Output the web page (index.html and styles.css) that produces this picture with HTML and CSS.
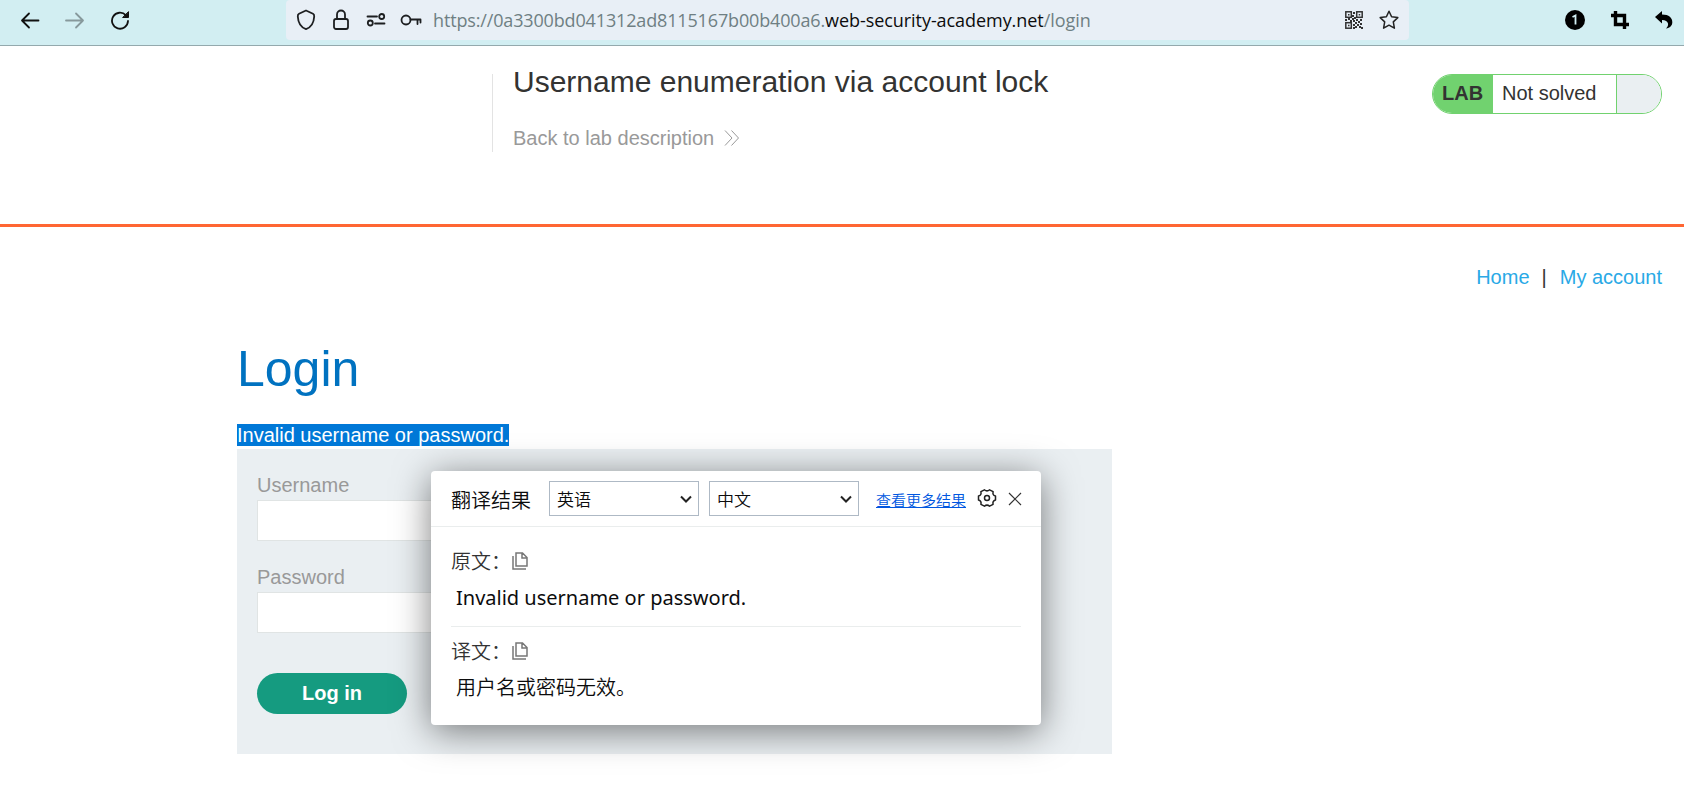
FILE: index.html
```html
<!DOCTYPE html>
<html lang="en">
<head>
<meta charset="utf-8">
<title>Username enumeration via account lock</title>
<link rel="stylesheet" href="styles.css">
</head>
<body>
<div class="toolbar">
  <div class="nav-icons">
    <svg width="20" height="20" viewBox="0 0 20 20" class="line"><path d="M18.5 10.5H2M9 3.5L2 10.5L9 17.5"/></svg>
    <svg width="20" height="20" viewBox="0 0 20 20" class="line dim"><path d="M1 10.5H18M11 3.5L18 10.5L11 17.5"/></svg>
    <svg width="20" height="20" viewBox="0 0 20 20" class="line"><path d="M15.8 5.2A8 8 0 1 0 18 11"/><path d="M18.5 2V7.5H13Z" fill="#111" stroke-width="1"/></svg>
  </div>
  <div class="urlbar">
    <div class="url-icons">
      <svg width="20" height="22" viewBox="0 0 20 22" class="line ink"><path d="M10 1.5L17 4.8C18 5.3 18.3 6 18.2 7.5C17.9 13 15.5 18.2 10 20.2C4.500 18.200 2.100 13 1.800 7.500C1.700 6 2 5.300 3 4.800Z"/></svg>
      <svg width="18" height="22" viewBox="0 0 18 22" class="line ink"><rect x="2" y="10" width="14" height="10" rx="2"/><path d="M5 10V5.500A4 4 0 0 1 13 5.500V10"/></svg>
      <svg width="20" height="14" viewBox="0 0 20 14" class="line ink"><path d="M1.500 3.500H11M9 10.500H18.500"/><circle cx="15.700" cy="3.500" r="2.500"/><circle cx="4.300" cy="10" r="2.500"/></svg>
      <svg width="22" height="14" viewBox="0 0 22 14" class="line ink key"><circle cx="6" cy="7" r="4.500"/><path d="M10.500 6.500H20.500V9.500M17.500 6.500V11"/></svg>
    </div>
    <div class="url"><span class="host">https://0a3300bd041312ad8115167b00b400a6.</span><span class="domain">web-security-academy.net</span><span>/login</span></div>
    <svg class="qr" width="18" height="18" viewBox="0 0 18 18"><g fill="none" stroke="#333" stroke-width="1.500"><rect x=".8" y=".8" width="5.500" height="5.500"/><rect x="11.700" y=".8" width="5.500" height="5.500"/><rect x=".8" y="11.700" width="5.500" height="5.500"/></g><path fill="#333" d="M3 3h1.500v1.500H3zM13.700 3h1.500v1.500h-1.500zM3 13.700h1.500v1.500H3zM8 1h2v2H8zM7 4h2v2H7zM9 6h2v2H9zM0 8h2v2H0zM3 7h2v2H3zM5 9h2v2H5zM7 7h2v2H7zM8 9h2v2H8zM11 8h2v2h-2zM13 10h2v2h-2zM15 8h2v2h-2zM10 11h2v2h-2zM8 13h2v2H8zM12 13h2v2h-2zM15 12h2v2h-2zM10 15h2v2h-2zM14 15h2v2h-2zM16 16h2v2h-2zM8 16h2v2H8z"/></svg>
    <svg class="star" width="20" height="20" viewBox="0 0 20 20"><path d="M10 1.200L12.600 6.800L18.800 7.600L14.300 11.900L15.400 18.200L10 15.200L4.600 18.200L5.700 11.900L1.200 7.600L7.400 6.800Z" fill="none" stroke="#222" stroke-width="1.500" stroke-linejoin="round"/></svg>
  </div>
  <div class="ext-icons">
    <svg width="20" height="20" viewBox="0 0 20 20"><circle cx="10" cy="10" r="10"/><path d="M7.500 7L10.500 5.500V14.500" fill="none" stroke="#d2eef2" stroke-width="1.800"/></svg>
    <svg width="18" height="18" viewBox="0 0 18 18"><path d="M4.500 0V13.500H18M0 4.500H13.500V18" fill="none" stroke="#000" stroke-width="3.400"/></svg>
    <svg width="18" height="18" viewBox="0 0 18 18"><path d="M0 6L7 0V3.500C14 3.500 17.500 7 17.300 11.500C17.200 14.500 15 17 11 17.500C14.500 14.500 14 9 7 9V12.500Z"/></svg>
  </div>
</div>

<header class="lab-header">
  <div class="lab-title">
    <h2>Username enumeration via account lock</h2>
    <a class="back">Back to lab description
      <svg width="16" height="16" viewBox="0 0 16 16"><path d="M1 .5L8 8L1 15.500M7.500 .5L14.500 8L7.500 15.500" fill="none" stroke="#999" stroke-width="1"/></svg>
    </a>
  </div>
  <div class="status"><b>LAB</b><span>Not solved</span><i></i></div>
</header>

<nav class="links"><a>Home</a><span>|</span><a>My account</a></nav>

<main>
  <h1>Login</h1>
  <p class="warning"><span>Invalid username or password.</span></p>
  <section class="login">
    <label>Username</label>
    <div class="field"></div>
    <label>Password</label>
    <div class="field"></div>
    <button>Log in</button>

    <div class="popup">
      <div class="popup-head">
        <span class="popup-title">翻译结果</span>
        <div class="select"><span>英语</span><svg width="12" height="8" viewBox="0 0 12 8"><path d="M1 1.500L6 6.500L11 1.500"/></svg></div>
        <div class="select"><span>中文</span><svg width="12" height="8" viewBox="0 0 12 8"><path d="M1 1.500L6 6.500L11 1.500"/></svg></div>
        <a class="more">查看更多结果</a>
        <svg class="gear" width="20" height="20" viewBox="0 0 20 20"><path d="M18.500 8V12Q15.200 13 16.100 16.300L12.600 18.200Q10 16 7.400 18.200L3.900 16.300Q4.800 13 1.500 12V8Q4.800 7 3.900 3.700L7.400 1.800Q10 4 12.600 1.800L16.100 3.700Q15.200 7 18.500 8Z"/><circle cx="10" cy="10" r="2.500"/></svg>
        <svg class="close" width="14" height="14" viewBox="0 0 14 14"><path d="M1 1L13 13M13 1L1 13"/></svg>
      </div>
      <div class="popup-body">
        <div class="row"><span>原文：</span><svg width="16" height="18" viewBox="0 0 16 18"><path d="M4 1H10.500L15 5.500V14H4ZM10 1V6H15M1 4V17H14"/></svg></div>
        <div class="text en">Invalid username or password.</div>
        <div class="row second"><span>译文：</span><svg width="16" height="18" viewBox="0 0 16 18"><path d="M4 1H10.500L15 5.500V14H4ZM10 1V6H15M1 4V17H14"/></svg></div>
        <div class="text">用户名或密码无效。</div>
      </div>
    </div>
  </section>
</main>
</body>
</html>
```
FILE: styles.css
```css
* { box-sizing: border-box; }
body {
  margin: 0;
  height: 809px;
  overflow: hidden;
  background: #fff;
  color: #333332;
  font: 20px/24px "Liberation Sans", Arial, sans-serif;
}
svg { display: block; flex: none; }

.toolbar {
  height: 46px;
  display: flex;
  background: #d2eef2;
  border-bottom: 1px solid #94a9ad;
}
.line {
  fill: none;
  stroke: #111;
  stroke-width: 1.8;
  stroke-linecap: round;
  stroke-linejoin: round;
}
.line.dim { stroke: #87999c; }
.line.ink { stroke: #1d1f21; }
.nav-icons { width: 286px; height: 40px; padding-left: 20px; display: flex; align-items: center; gap: 25px; }
.urlbar { width: 1123px; height: 40px; display: flex; align-items: center; background: #e8eff6; border-radius: 4px; }
.url-icons { width: 147px; padding-left: 10px; display: flex; align-items: center; gap: 16px; }
.key { margin-left: -2px; }
.url { width: 912px; white-space: nowrap; font: 18px/24px "Open Sans", "Noto Sans", sans-serif; letter-spacing: -.06px; color: #6f7f83; }
.host { letter-spacing: -.15px; }
.domain { color: #0c0c0d; }
.star { margin-left: 16px; }
.ext-icons { height: 40px; padding-left: 156px; display: flex; align-items: center; gap: 26px; }

.lab-header {
  height: 181px;
  border-bottom: 3px solid #ff6633;
  padding: 28px 22px 0 492px;
  display: flex;
  justify-content: space-between;
  align-items: flex-start;
}
.lab-title { height: 78px; border-left: 1px solid #e3e3e3; padding-left: 20px; }
.lab-title h2 { margin: -9px 0 0; font-weight: 400; font-size: 30px; line-height: 34px; }
.back { display: flex; align-items: center; gap: 10px; margin-top: 27px; color: #999; }
.status {
  width: 230px;
  height: 40px;
  display: flex;
  border: 1px solid #71d26f;
  border-radius: 20px;
  overflow: hidden;
  line-height: 37px;
}
.status b { width: 60px; padding-left: 9px; background: #71d26f; }
.status span { width: 123px; padding-left: 9px; }
.status i { flex: 1; border-left: 1px solid #71d26f; background: #eaeff2; }

.links { display: flex; justify-content: flex-end; padding: 38px 22px 0 0; }
.links a { color: #29a9e6; }
.links span { margin: 0 13px 0 12px; }

main { padding: 51px 0 0 237px; }
h1 { margin: 0; font-weight: 400; font-size: 50px; line-height: 58px; color: #0072c0; }
.warning { margin: 26px 0 0; height: 25px; line-height: 22px; }
.warning span { display: inline-block; background: #0078d7; color: #fff; }
.login { position: relative; width: 875px; height: 305px; padding: 24px 20px 0; background: #eaeff2; }
.login label { display: block; height: 27px; color: #999; }
.field { width: 500px; height: 41px; margin-bottom: 24px; background: #fff; border: 1px solid #e0e4e4; }
button {
  display: block;
  width: 150px;
  height: 41px;
  margin-top: 40px;
  border: 0;
  border-radius: 21px;
  background: #159b80;
  color: #fff;
  font: bold 20px/41px "Liberation Sans", Arial, sans-serif;
  padding: 0;
}

.popup {
  position: absolute;
  left: 194px;
  top: 22px;
  width: 610px;
  height: 254px;
  background: #fff;
  border-radius: 4px;
  box-shadow: 0 6px 36px rgba(0, 0, 0, .5);
  color: #0c0c0d;
  font-family: "Noto Sans CJK SC", sans-serif;
  font-weight: 350;
}
.popup-head { height: 56px; border-bottom: 1px solid #eaeded; display: flex; align-items: center; padding: 0 0 0 20px; }
.popup-title { flex: none; width: 98px; padding-top: 2px; }
.select {
  flex: none;
  width: 150px;
  height: 35px;
  margin-right: 10px;
  padding: 0 6px 0 7px;
  border: 1px solid #aeb9c5;
  display: flex;
  align-items: center;
  justify-content: space-between;
  font-size: 17px;
}
.select path { fill: none; stroke: #222; stroke-width: 2; }
.more { flex: none; margin-left: 7px; padding-top: 3px; font-size: 15px; color: #0057e0; text-decoration: underline; white-space: nowrap; }
.gear { margin-left: 11px; margin-top: -1px; fill: none; stroke: #222; stroke-width: 1.5; stroke-linejoin: round; }
.close { margin-left: 11px; fill: none; stroke: #333; stroke-width: 1.2; }
.popup-body { padding: 20px 20px 0; }
.row { display: flex; align-items: center; height: 28px; gap: 1px; color: #333; }
.row path { fill: none; stroke: #777; stroke-width: 1.5; }
.text { padding-left: 5px; height: 28px; line-height: 28px; margin-top: 9px; }
.text.en { font-family: "Noto Sans", sans-serif; font-weight: 400; margin-top: 9px; }
.row.second { margin-top: 14px; border-top: 1px solid #eaeded; height: 48px; }
.second + .text { margin-top: -1px; }
```
